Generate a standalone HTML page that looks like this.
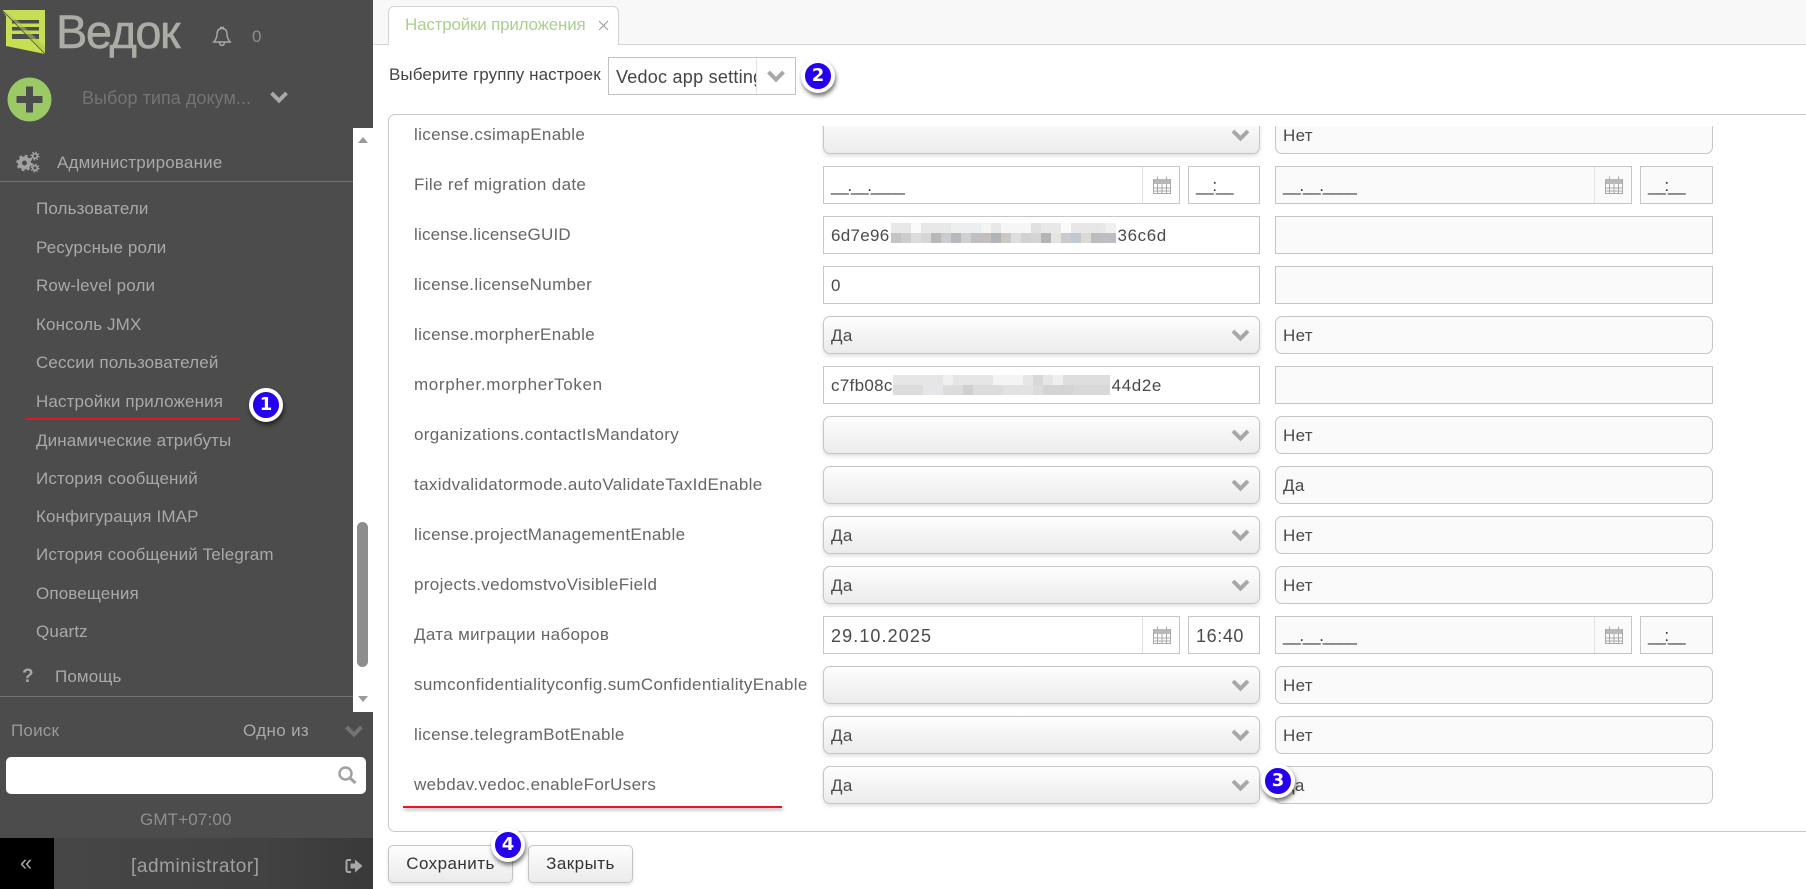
<!DOCTYPE html>
<html lang="ru"><head><meta charset="utf-8"><title>Настройки приложения</title>
<style>
*{box-sizing:border-box}
html,body{margin:0;padding:0;width:1806px;height:889px;overflow:hidden;background:#fff;font-family:"Liberation Sans",sans-serif}
.a{position:absolute;white-space:nowrap}
#side{position:absolute;left:0;top:0;width:373px;height:889px;background:#4c4c4c;overflow:hidden}
.mi{position:absolute;left:36px;margin-top:1px;color:#a9a9a9;font-size:17px;line-height:20px;letter-spacing:.13px;white-space:nowrap}
.l{position:absolute;left:414px;color:#666;font-size:17px;line-height:20px;letter-spacing:.34px;white-space:nowrap}
.c{position:absolute;height:38px;border:1px solid #c6c6c6;background:#fff;color:#4a4a4a;font-size:17px;line-height:38px;padding-left:7px;white-space:nowrap;overflow:hidden;letter-spacing:.3px}
.s{border-radius:7px;background:linear-gradient(#fefefe,#ebebeb);box-shadow:0 2px 4px rgba(0,0,0,.13);left:823px;width:437px}
.r{left:1275px;width:438px;background:#fafafa}
.rr{border-radius:7px}
.i{left:823px;width:437px}
.d{left:823px;width:357px}
.t{left:1188px;width:72px}
.rd{left:1275px;width:357px;background:#fafafa}
.rt{left:1640px;width:73px;background:#fafafa}
.ph{letter-spacing:-1.25px;color:#333}
.ic{position:absolute;pointer-events:none}
.bd{position:absolute;width:34px;height:34px;border-radius:50%;background:#2400ee;border:4px solid #fff;box-shadow:1px 3px 4px rgba(0,0,0,.55);color:#fff;font:bold 18px/26px "DejaVu Sans",sans-serif;text-align:center;z-index:9}
.btn{position:absolute;top:845px;height:38px;border:1px solid #c4c4c4;border-radius:5px;background:linear-gradient(#fdfdfd,#ebebeb);box-shadow:0 2px 3px rgba(0,0,0,.12);font-size:17px;line-height:36px;text-align:center;color:#333;letter-spacing:.45px}
</style></head><body>

<div id="side">
  <svg class="ic" style="left:0;top:0" width="60" height="60" viewBox="0 0 60 60">
    <path d="M2 10H45V54L6 46V16Z" fill="#c5de52"/>
    <rect x="12" y="20" width="27" height="3.500" fill="#4c4c4c"/><rect x="12" y="27" width="27" height="3.500" fill="#4c4c4c"/><rect x="12" y="34" width="27" height="5" fill="#4c4c4c"/>
    <path d="M2 10L45 54L45 47L17 20Z" fill="#b0c748" opacity=".55"/>
    <path d="M2 10L45 54" stroke="#4c4c4c" stroke-width=".8"/>
  </svg>
  <div class="a" style="left:56px;top:5px;font-size:47px;line-height:54px;color:#acaca5;letter-spacing:-1.5px;-webkit-text-stroke:.5px #acaca5">Ведок</div>
  <svg class="ic" style="left:212px;top:26px" width="20" height="21" viewBox="0 0 20 21" fill="none" stroke="#a8a8a8" stroke-width="1.4"><path d="M10 2.500C6.500 2.500 5 5 5 8.500C5 12 3.500 14 1.800 16H18.200C16.500 14 15 12 15 8.500C15 5 13.500 2.500 10 2.500ZM8 1.500H12M7.500 16.500C7.800 18.500 9 19.500 10 19.500C11 19.500 12.200 18.500 12.500 16.500"/></svg>
  <div class="a" style="left:252px;top:27px;font-size:17px;line-height:20px;color:#8e8e8e">0</div>

  <svg class="ic" style="left:7px;top:77px" width="45" height="45" viewBox="0 0 45 45"><circle cx="22.500" cy="22.500" r="22" fill="#9ac965"/><path d="M19.500 10H25.500V19.500H35V25.500H25.500V35H19.500V25.500H10V19.500H19.500Z" fill="#4c4c4c" stroke="#4c4c4c" stroke-linejoin="round"/></svg>
  <div class="a" style="left:82px;top:88px;font-size:18px;line-height:20px;color:#747474;letter-spacing:.05px">Выбор типа докум...</div>
  <svg class="ic" style="left:269px;top:90px" width="20" height="15" viewBox="0 0 20 15" fill="none" stroke="#a8a8a8" stroke-width="4"><path d="M2.500 3L10 10.500L17.500 3"/></svg>

  <svg class="ic" style="left:16px;top:151px" width="24" height="22" viewBox="0 0 24 22" fill="none" stroke="#a2a2a2">
    <circle cx="8.500" cy="12" r="4.500" stroke-width="4"/><circle cx="8.500" cy="12" r="7" stroke-width="2.400" stroke-dasharray="2.800 2.700"/>
    <circle cx="19" cy="5" r="2.300" stroke-width="1.700"/><circle cx="19" cy="5" r="3.800" stroke-width="1.400" stroke-dasharray="1.500 1.500"/>
    <circle cx="19" cy="17" r="2.300" stroke-width="1.700"/><circle cx="19" cy="17" r="3.800" stroke-width="1.400" stroke-dasharray="1.500 1.500"/>
  </svg>
  <div class="mi" style="left:57px;top:152px;letter-spacing:.2px">Администрирование</div>
  <div class="a" style="left:0;top:181px;width:353px;height:1px;background:#747474"></div>

  <div class="mi" style="top:198px">Пользователи</div>
  <div class="mi" style="top:237px">Ресурсные роли</div>
  <div class="mi" style="top:275px">Row-level роли</div>
  <div class="mi" style="top:314px">Консоль JMX</div>
  <div class="mi" style="top:352px">Сессии пользователей</div>
  <div class="mi" style="top:391px">Настройки приложения</div>
  <div class="mi" style="top:430px">Динамические атрибуты</div>
  <div class="mi" style="top:468px">История сообщений</div>
  <div class="mi" style="top:506px">Конфигурация IMAP</div>
  <div class="mi" style="top:544px">История сообщений Telegram</div>
  <div class="mi" style="top:583px">Оповещения</div>
  <div class="mi" style="top:621px">Quartz</div>
  <div class="a" style="left:26px;top:418px;width:214px;height:2px;background:#e2171f"></div>

  <div class="a" style="left:22px;top:666px;font-size:19px;line-height:22px;font-weight:bold;color:#a5a5a5">?</div>
  <div class="mi" style="left:55px;top:666px">Помощь</div>
  <div class="a" style="left:0;top:696px;width:353px;height:1px;background:#747474"></div>

  <div class="a" style="left:353px;top:128px;width:20px;height:584px;background:#fff"></div>
  <div class="a" style="left:357px;top:522px;width:11px;height:145px;border-radius:6px;background:#8d8d8d"></div>
  <svg class="ic" style="left:357px;top:136px" width="12" height="8"><path d="M1 7H11L6 1Z" fill="#9a9a9a"/></svg>
  <svg class="ic" style="left:357px;top:695px" width="12" height="8"><path d="M1 1H11L6 7Z" fill="#9a9a9a"/></svg>

  <div class="a" style="left:11px;top:721px;font-size:17px;line-height:20px;color:#9a9a9a;letter-spacing:.2px">Поиск</div>
  <div class="a" style="left:243px;top:721px;font-size:17px;line-height:20px;color:#a9a9a9;letter-spacing:.35px">Одно из</div>
  <svg class="ic" style="left:344px;top:724px" width="20" height="15" viewBox="0 0 20 15" fill="none" stroke="#737373" stroke-width="4"><path d="M2.500 3L10 10.500L17.500 3"/></svg>
  <div class="a" style="left:6px;top:757px;width:360px;height:37px;border-radius:5px;background:#fff"></div>
  <svg class="ic" style="left:337px;top:765px" width="20" height="20" viewBox="0 0 20 20" fill="none" stroke="#a0a0a0" stroke-width="2.400"><circle cx="8.500" cy="8.500" r="6"/><path d="M13 13L18.500 18" stroke-width="3"/></svg>
  <div class="a" style="left:140px;top:810px;font-size:17px;line-height:20px;color:#8f8f8f;letter-spacing:.15px">GMT+07:00</div>

  <div class="a" style="left:0;top:838px;width:373px;height:51px;background:linear-gradient(90deg,#474747,#424242 70%,#393939)"></div>
  <div class="a" style="left:0;top:838px;width:54px;height:51px;background:#000"></div>
  <div class="a" style="left:20px;top:851px;font-size:22px;line-height:24px;color:#a5a5a5">«</div>
  <div class="a" style="left:131px;top:856px;font-size:19px;line-height:22px;color:#a0a0a0;letter-spacing:.55px">[administrator]</div>
  <svg class="ic" style="left:345px;top:858px" width="18" height="16" viewBox="0 0 18 16"><path d="M6 2H3A1.500 1.500 0 0 0 1.500 3.500V12.500A1.500 1.500 0 0 0 3 14H6" fill="none" stroke="#a8a8a8" stroke-width="2"/><path d="M5.500 5.500H10V1.500L17.500 8L10 14.500V10.500H5.500Z" fill="#a8a8a8"/></svg>
</div>

<div class="a" style="left:373px;top:0;width:1433px;height:45px;background:#f8f8f8;border-bottom:1px solid #d4d4d4"></div>
<div class="a" style="left:388px;top:6px;width:231px;height:39px;background:#fff;border:1px solid #d4d4d4;border-bottom:0;border-radius:6px 6px 0 0"></div>
<div class="a" style="left:405px;top:15px;font-size:17px;line-height:20px;color:#a9d08c;letter-spacing:-.2px">Настройки приложения</div>
<svg class="ic" style="left:598px;top:20px" width="11" height="11" fill="none" stroke="#a0a0a0" stroke-width="1.200"><path d="M1 1L10 10M10 1L1 10"/></svg>

<div class="a" style="left:389px;top:65px;font-size:17px;line-height:20px;color:#444;letter-spacing:.08px">Выберите группу настроек</div>
<div class="a" style="left:608px;top:57px;width:188px;height:38px;border:1px solid #c2c2c2;background:#fff"></div>
<div class="a" style="left:616px;top:57px;width:140px;height:38px;overflow:hidden;font-size:18px;line-height:40px;color:#444;letter-spacing:.25px">Vedoc app settings</div>
<div class="a" style="left:756px;top:58px;width:1px;height:36px;background:#e2e2e2"></div>
<svg class="ic" style="left:766px;top:69px" width="20" height="15" viewBox="0 0 20 15" fill="none" stroke="#a8a8a8" stroke-width="4"><path d="M2.500 3L10 10.500L17.500 3"/></svg>

<div class="a" style="left:388px;top:114px;width:1430px;height:718px;border:1px solid #c8c8c8;border-radius:7px"></div>

<div class="a" style="left:389px;top:126px;width:1417px;height:700px;overflow:hidden">
<div style="position:absolute;left:-389px;top:-126px;width:1806px;height:889px">

  <div class="l" style="top:125px">license.csimapEnable</div>
  <div class="c s" style="top:116px"></div><div class="c r rr" style="top:116px">Нет</div>

  <div class="l" style="top:175px">File ref migration date</div>
  <div class="c d ph" style="top:166px">__.__.____</div><div class="c t ph" style="top:166px">__:__</div>
  <div class="c rd ph" style="top:166px">__.__.____</div><div class="c rt ph" style="top:166px">__:__</div>

  <div class="l" style="top:225px;letter-spacing:.2px">license.licenseGUID</div>
  <div class="c i" style="top:216px">6d7e96<span style="margin-left:228px;letter-spacing:.6px">36c6d</span></div><div class="c r" style="top:216px"></div>

  <div class="l" style="top:275px">license.licenseNumber</div>
  <div class="c i" style="top:266px">0</div><div class="c r" style="top:266px"></div>

  <div class="l" style="top:325px">license.morpherEnable</div>
  <div class="c s" style="top:316px">Да</div><div class="c r rr" style="top:316px">Нет</div>

  <div class="l" style="top:375px;letter-spacing:.65px">morpher.morpherToken</div>
  <div class="c i" style="top:366px">c7fb08c<span style="margin-left:219px;letter-spacing:.6px">44d2e</span></div><div class="c r" style="top:366px"></div>

  <div class="l" style="top:425px">organizations.contactIsMandatory</div>
  <div class="c s" style="top:416px"></div><div class="c r rr" style="top:416px">Нет</div>

  <div class="l" style="top:475px">taxidvalidatormode.autoValidateTaxIdEnable</div>
  <div class="c s" style="top:466px"></div><div class="c r rr" style="top:466px">Да</div>

  <div class="l" style="top:525px">license.projectManagementEnable</div>
  <div class="c s" style="top:516px">Да</div><div class="c r rr" style="top:516px">Нет</div>

  <div class="l" style="top:575px">projects.vedomstvoVisibleField</div>
  <div class="c s" style="top:566px">Да</div><div class="c r rr" style="top:566px">Нет</div>

  <div class="l" style="top:625px">Дата миграции наборов</div>
  <div class="c d" style="top:616px;font-size:18px;letter-spacing:1.1px">29.10.2025</div><div class="c t" style="top:616px;font-size:18px;letter-spacing:.6px">16:40</div>
  <div class="c rd ph" style="top:616px">__.__.____</div><div class="c rt ph" style="top:616px">__:__</div>

  <div class="l" style="top:675px">sumconfidentialityconfig.sumConfidentialityEnable</div>
  <div class="c s" style="top:666px"></div><div class="c r rr" style="top:666px">Нет</div>

  <div class="l" style="top:725px">license.telegramBotEnable</div>
  <div class="c s" style="top:716px">Да</div><div class="c r rr" style="top:716px">Нет</div>

  <div class="l" style="top:775px">webdav.vedoc.enableForUsers</div>
  <div class="c s" style="top:766px">Да</div><div class="c r rr" style="top:766px">Да</div>

  <svg class="ic" style="left:0;top:0" width="1806" height="889" fill="none" stroke="#a8a8a8" stroke-width="4">
    <path d="M1233 131L1240.500 138.500L1248 131M1233 331L1240.500 338.500L1248 331M1233 431L1240.500 438.500L1248 431M1233 481L1240.500 488.500L1248 481M1233 531L1240.500 538.500L1248 531M1233 581L1240.500 588.500L1248 581M1233 681L1240.500 688.500L1248 681M1233 731L1240.500 738.500L1248 731M1233 781L1240.500 788.500L1248 781"/>
    <g stroke="#e2e2e2" stroke-width="1"><path d="M1142.500 167V203M1142.500 617V653M1594.500 167V203M1594.500 617V653"/></g>
    <g stroke="#a8a8a8" stroke-width="1">
      <path fill="#b8b8b8" stroke="none" d="M1153 179H1171V184H1153ZM1605 179H1623V184H1605ZM1153 629H1171V634H1153ZM1605 629H1623V634H1605Z"/>
      <path d="M1153.500 179V193.500H1170.500V179M1153.500 188H1170.500M1153.500 191H1170.500M1157.500 184V193.500M1162 184V193.500M1166.500 184V193.500M1157.500 176.500V180M1166.500 176.500V180"/>
      <path d="M1605.500 179V193.500H1622.500V179M1605.500 188H1622.500M1605.500 191H1622.500M1609.500 184V193.500M1614 184V193.500M1618.500 184V193.500M1609.500 176.500V180M1618.500 176.500V180"/>
      <path d="M1153.500 629V643.500H1170.500V629M1153.500 638H1170.500M1153.500 641H1170.500M1157.500 634V643.500M1162 634V643.500M1166.500 634V643.500M1157.500 626.500V630M1166.500 626.500V630"/>
      <path d="M1605.500 629V643.500H1622.500V629M1605.500 638H1622.500M1605.500 641H1622.500M1609.500 634V643.500M1614 634V643.500M1618.500 634V643.500M1609.500 626.500V630M1618.500 626.500V630"/>
    </g>
  </svg>

  <svg class="ic" style="left:891px;top:223px" width="225" height="20" shape-rendering="crispEdges">
    <g><rect width="225" height="10" fill="#e8e8e8"/><rect x="20" width="10" height="10" fill="#fafafa"/><rect x="60" width="40" height="10" fill="#eceef0"/><rect x="90" width="10" height="10" fill="#f4f4f4"/><rect x="110" width="30" height="10" fill="#f6f6f6"/><rect x="140" width="10" height="10" fill="#e2e0e0"/><rect x="170" width="10" height="10" fill="#fafafa"/><rect x="180" width="30" height="10" fill="#e8e6e6"/><rect x="215" width="10" height="10" fill="#f0f0f0"/></g>
    <g transform="translate(0,10)"><rect width="10" height="10" fill="#c4c4c4"/><rect x="10" width="10" height="10" fill="#ccc"/><rect x="20" width="10" height="10" fill="#dcdcdc"/><rect x="30" width="10" height="10" fill="#d8d6d4"/><rect x="40" width="10" height="10" fill="#b8b8b8"/><rect x="50" width="10" height="10" fill="#c8ccd0"/><rect x="60" width="10" height="10" fill="#b8b8bc"/><rect x="70" width="10" height="10" fill="#cfd0d2"/><rect x="80" width="10" height="10" fill="#c0c0c4"/><rect x="90" width="10" height="10" fill="#c4bfbc"/><rect x="100" width="10" height="10" fill="#b0b4b8"/><rect x="110" width="10" height="10" fill="#ccc8c4"/><rect x="120" width="10" height="10" fill="#dcdee0"/><rect x="130" width="10" height="10" fill="#d0d2d6"/><rect x="140" width="10" height="10" fill="#d4d4d4"/><rect x="150" width="10" height="10" fill="#b4b4b6"/><rect x="160" width="10" height="10" fill="#e4e4e0"/><rect x="170" width="10" height="10" fill="#c8ccce"/><rect x="180" width="10" height="10" fill="#c0c8d0"/><rect x="190" width="10" height="10" fill="#dcd8d2"/><rect x="200" width="10" height="10" fill="#bbbcc0"/><rect x="210" width="15" height="10" fill="#bcbec4"/></g>
  </svg>
  <svg class="ic" style="left:893px;top:375px" width="217" height="20" shape-rendering="crispEdges">
    <rect width="217" height="10" fill="#e6e6e6"/><rect x="50" width="10" height="10" fill="#f0f0f2"/><rect x="100" width="30" height="10" fill="#f4f4f4"/><rect x="140" width="10" height="10" fill="#d8d8d8"/><rect x="160" width="10" height="10" fill="#eeeff0"/><rect x="170" width="47" height="10" fill="#dedede"/>
    <rect y="10" width="217" height="10" fill="#dcdcdc"/><rect x="30" y="10" width="20" height="10" fill="#e6e6e8"/><rect x="70" y="10" width="10" height="10" fill="#cfcfcf"/><rect x="110" y="10" width="30" height="10" fill="#e2e2e2"/><rect x="150" y="10" width="30" height="10" fill="#d4d4d4"/><rect x="180" y="10" width="37" height="10" fill="#d8d8d8"/>
  </svg>
</div></div>

<div class="a" style="left:403px;top:806px;width:379px;height:2px;background:#e8151d;box-shadow:1px 2px 3px rgba(0,0,0,.35)"></div>

<div class="btn" style="left:388px;width:125px">Сохранить</div>
<div class="btn" style="left:528px;width:105px">Закрыть</div>

<div class="bd" style="left:249px;top:388px">1</div>
<div class="bd" style="left:801px;top:59px">2</div>
<div class="bd" style="left:1261px;top:764px">3</div>
<div class="bd" style="left:491px;top:828px">4</div>
</body></html>
